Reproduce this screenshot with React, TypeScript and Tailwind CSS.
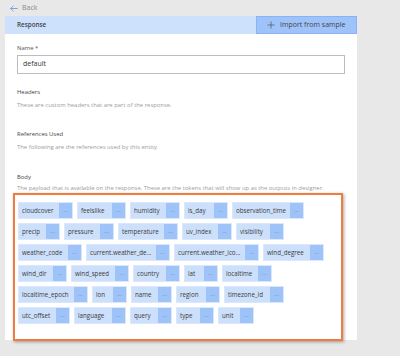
const rows: [string, number][][] = [
  [["cloudcover", 55], ["feelslike", 49], ["humidity", 50], ["is_day", 44], ["observation_time", 72]],
  [["precip", 42], ["pressure", 50], ["temperature", 60], ["uv_index", 50], ["visibility", 48]],
  [["weather_code", 64], ["current.weather_de...", 84], ["current.weather_ico...", 85], ["wind_degree", 61]],
  [["wind_dir", 49], ["wind_speed", 58], ["country", 47], ["lat", 34], ["localtime", 50]],
  [["localtime_epoch", 70], ["lon", 35], ["name", 41], ["region", 44], ["timezone_id", 60]],
  [["utc_offset", 52], ["language", 52], ["query", 42], ["type", 38], ["unit", 36]],
];

const Chip = ({label, width}: {label: string; width: number}) => (
  <div className="flex h-[17px] border border-[#dbe8fb]" style={{width}}>
    <div className="flex-1 bg-[#cde0fb] flex items-center pl-[3px] text-[6.2px] text-[#3a3a3a] whitespace-nowrap overflow-hidden">
      {label}
    </div>
    <div className="w-[13px] bg-[#9ec3f8] flex items-center justify-center text-[6px] leading-none text-[#6a7a90]">
      ···
    </div>
  </div>
);

export default function App() {
  return (
    <div className="w-[400px] h-[356px] bg-[#e8e8e8] overflow-hidden font-['Open_Sans',sans-serif]">
      <div className="h-4 flex items-center pl-[10px]">
        <svg width="8" height="7" viewBox="0 0 8 7" fill="none" stroke="#5f93e4" strokeWidth="0.8">
          <path d="M7.8 3.5H0.6M3.4 0.7L0.6 3.5L3.4 6.3"/>
        </svg>
        <span className="ml-[4px] text-[7px] text-[#888]">Back</span>
      </div>

      <div className="ml-[5px] w-[352px] h-[324px] bg-white">
        <div className="h-[18px] bg-[#cde0fc] flex items-center">
          <span className="pl-3 text-[6.3px] font-semibold text-[#444]">Response</span>
          <div className="ml-auto h-[18px] w-[101px] bg-[#9ec3fb] border border-[#8ab3f4] flex items-center pl-[10px] text-[7px] text-[#444]">
            <svg width="8" height="8" viewBox="0 0 8 8" stroke="#555" strokeWidth="0.7">
              <path d="M4 0.5V7.5M0.5 4H7.5"/>
            </svg>
            <span className="ml-[5px]">Import from sample</span>
          </div>
        </div>

        <div className="px-3">
          <div className="mt-[10px] h-2 leading-2 text-[5.9px] text-[#555]">Name *</div>
          <div className="mt-[3px] h-[19px] border border-[#bcbcbc] flex items-center px-[5px] text-[7px] text-[#333]">
            default
          </div>

          <div className="mt-[14px] h-2 leading-2 text-[5.9px] text-[#444]">Headers</div>
          <div className="mt-[5px] h-2 leading-2 text-[5.9px] text-[#9c9c9c]">
            These are custom headers that are part of the response.
          </div>

          <div className="mt-[21px] h-2 leading-2 text-[5.9px] text-[#444]">References Used</div>
          <div className="mt-[5px] h-2 leading-2 text-[5.9px] text-[#9c9c9c]">
            The following are the references used by this entity
          </div>

          <div className="mt-[22px] h-2 leading-2 text-[5.9px] text-[#444]">Body</div>
          <div className="mt-[3px] h-2 leading-2 text-[5.9px] text-[#9c9c9c] whitespace-nowrap">
            The payload that is available on the response. These are the tokens that will show up as the outputs in designer.
          </div>
        </div>

        <div className="mt-[1px] ml-[8px] w-[330px] h-[148px] border-[2.5px] border-[#f07c3e] shadow-[1px_1px_3px_rgba(0,0,0,0.35)] pl-[3px] pt-[7px] flex flex-col gap-[4px]">
          {rows.map((row, i) => (
            <div key={i} className="flex gap-[4px]">
              {row.map(([label, w]) => (
                <Chip key={label} label={label} width={w}/>
              ))}
            </div>
          ))}
        </div>
      </div>
    </div>
  );
}
